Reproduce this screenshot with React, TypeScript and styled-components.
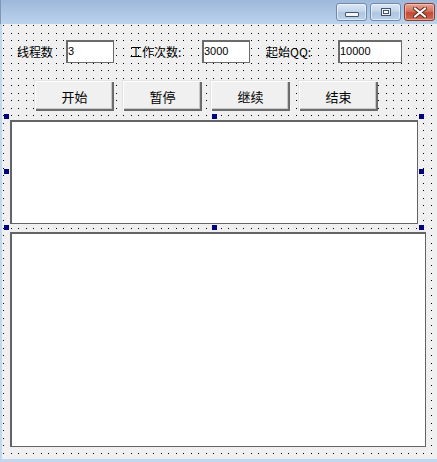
import styled, { createGlobalStyle } from 'styled-components'

const dotTile = encodeURIComponent(
  "<svg xmlns='http://www.w3.org/2000/svg' width='15' height='15' shape-rendering='crispEdges'>" +
    "<rect x='0' y='0' width='1' height='1'/><rect x='8' y='0' width='1' height='1'/>" +
    "<rect x='0' y='8' width='1' height='1'/><rect x='8' y='8' width='1' height='1'/></svg>"
)

const GlobalStyle = createGlobalStyle`
  html, body {
    margin: 0;
    padding: 0;
    background: #f0f0f0;
  }
  body {
    font-family: "Noto Sans CJK SC", "Liberation Sans", sans-serif;
    font-size: 12px;
  }
`

const Window = styled.div`
  width: 437px;
  height: 462px;
  display: flex;
  flex-direction: column;
  overflow: hidden;
`

const TitleBar = styled.div`
  height: 24px;
  flex: none;
  display: flex;
  justify-content: flex-end;
  align-items: flex-start;
  padding: 3px 2px 0 0;
  box-sizing: border-box;
  background: linear-gradient(#9db8da, #b3cbe7 70%, #bcd3ec);
  border-left: 1px solid #7d97b8;
`

const CaptionGroup = styled.div`
  display: flex;
  gap: 3px;
`

const CapButton = styled.div<{ $close?: boolean }>`
  width: 31px;
  height: 18px;
  box-sizing: border-box;
  border-radius: 3px;
  display: flex;
  align-items: center;
  justify-content: center;
  border: 1px solid ${p => (p.$close ? '#8a3b2e' : '#6f8aae')};
  background: ${p =>
    p.$close
      ? 'linear-gradient(#e8a594, #d5725d 45%, #c24a35 55%, #cf6a52)'
      : 'linear-gradient(#dbe7f4, #c3d5ea 45%, #aec6e2 55%, #bcd2ea)'};
  box-shadow: inset 0 0 0 1px ${p => (p.$close ? 'rgba(255,210,200,0.6)' : 'rgba(255,255,255,0.55)')};
`

const MinGlyph = styled.div`
  width: 12px;
  height: 3px;
  margin-top: 4px;
  background: #f4f6f9;
  border: 1px solid #44546a;
  border-radius: 1px;
`

const MaxGlyph = styled.div`
  width: 8px;
  height: 6px;
  border: 1px solid #44546a;
  background: #e9eef5;
  display: flex;
  align-items: center;
  justify-content: center;
  &::after {
    content: '';
    width: 4px;
    height: 2px;
    border: 1px solid #44546a;
    background: #fff;
  }
`

const Frame = styled.div`
  flex: 1;
  display: flex;
  border-left: 2px solid #c2d7ed;
  border-bottom: 3px solid #c2d7ed;
`

const Client = styled.div`
  flex: 1;
  display: flex;
  flex-direction: column;
  align-items: flex-start;
  padding-top: 16px;
  background-color: #f0f0f0;
  background-image: url("data:image/svg+xml,${dotTile}");
  background-position: 1px 1px;
`

const FieldRow = styled.div`
  display: flex;
  align-items: center;
  height: 23px;
  padding-left: 15px;
  gap: 16px;
`

const Field = styled.div`
  display: flex;
  align-items: center;
`

const Label = styled.span<{ $w: number }>`
  width: ${p => p.$w}px;
  color: #000;
  font-size: 12px;
  line-height: 14px;
  white-space: nowrap;
`

const TextBox = styled.div<{ $w: number }>`
  width: ${p => p.$w}px;
  height: 23px;
  box-sizing: border-box;
  border: 2px solid #6b6b6b;
  border-right-width: 1px;
  border-bottom-width: 1px;
  background: #fff;
  font-family: "Liberation Sans", sans-serif;
  font-size: 11px;
  line-height: 19px;
  padding-left: 0;
  color: #000;
`

const ButtonRow = styled.div`
  display: flex;
  gap: 8px;
  margin-top: 17px;
  padding-left: 32px;
`

const Button = styled.div`
  width: 80px;
  height: 31px;
  box-sizing: border-box;
  display: flex;
  align-items: center;
  justify-content: center;
  background: #f0f0f0;
  border-top: 1px solid #e3e3e3;
  border-left: 1px solid #e3e3e3;
  box-shadow: inset 1px 1px #fff, inset -1px -1px #696969, inset -2px -2px #6f6f6f, inset -3px -3px #c8c8c8;
  font-size: 13px;
  color: #000;
`

const LogBox = styled.div<{ $w: number; $h: number; $gap: number }>`
  position: relative;
  width: ${p => p.$w}px;
  height: ${p => p.$h}px;
  margin-top: ${p => p.$gap}px;
  margin-left: 8px;
  box-sizing: border-box;
  border: 2px solid #646464;
  border-right-width: 1px;
  border-bottom-width: 1px;
  background: #fff;
`

const Handle = styled.span<{ $x: 'l' | 'c' | 'r'; $y: 't' | 'm' | 'b' }>`
  position: absolute;
  width: 5px;
  height: 5px;
  background: #000080;
  ${p => (p.$x === 'l' ? 'left: -8px;' : p.$x === 'r' ? 'right: -7px;' : 'left: calc(50% - 3px);')}
  ${p => (p.$y === 't' ? 'top: -8px;' : p.$y === 'b' ? 'bottom: -7px;' : 'top: calc(50% - 4px);')}
`

const handles: Array<['l' | 'c' | 'r', 't' | 'm' | 'b']> = [
  ['l', 't'], ['c', 't'], ['r', 't'],
  ['l', 'm'], ['r', 'm'],
  ['l', 'b'], ['c', 'b'], ['r', 'b'],
]

const fields = [
  { label: '线程数', lw: 49, value: '3', bw: 48 },
  { label: '工作次数:', lw: 72, value: '3000', bw: 48 },
  { label: '起始QQ:', lw: 72, value: '10000', bw: 64 },
]

const buttons = ['开始', '暂停', '继续', '结束']

export default function App() {
  return (
    <>
      <GlobalStyle />
      <Window>
        <TitleBar>
          <CaptionGroup>
            <CapButton><MinGlyph /></CapButton>
            <CapButton><MaxGlyph /></CapButton>
            <CapButton $close>
              <svg width="14" height="11" viewBox="0 0 14 11">
                <path d="M2 1.5 L12 9.5 M12 1.5 L2 9.5" stroke="#5a2a22" strokeWidth="4" strokeLinecap="round" />
                <path d="M2 1.5 L12 9.5 M12 1.5 L2 9.5" stroke="#ffffff" strokeWidth="2.2" strokeLinecap="round" />
              </svg>
            </CapButton>
          </CaptionGroup>
        </TitleBar>
        <Frame>
          <Client>
            <FieldRow>
              {fields.map(f => (
                <Field key={f.label}>
                  <Label $w={f.lw}>{f.label}</Label>
                  <TextBox $w={f.bw}>{f.value}</TextBox>
                </Field>
              ))}
            </FieldRow>
            <ButtonRow>
              {buttons.map(b => (
                <Button key={b}>{b}</Button>
              ))}
            </ButtonRow>
            <LogBox $w={408} $h={104} $gap={9}>
              {handles.map(([x, y]) => (
                <Handle key={x + y} $x={x} $y={y} />
              ))}
            </LogBox>
            <LogBox $w={416} $h={215} $gap={8} />
          </Client>
        </Frame>
      </Window>
    </>
  )
}
